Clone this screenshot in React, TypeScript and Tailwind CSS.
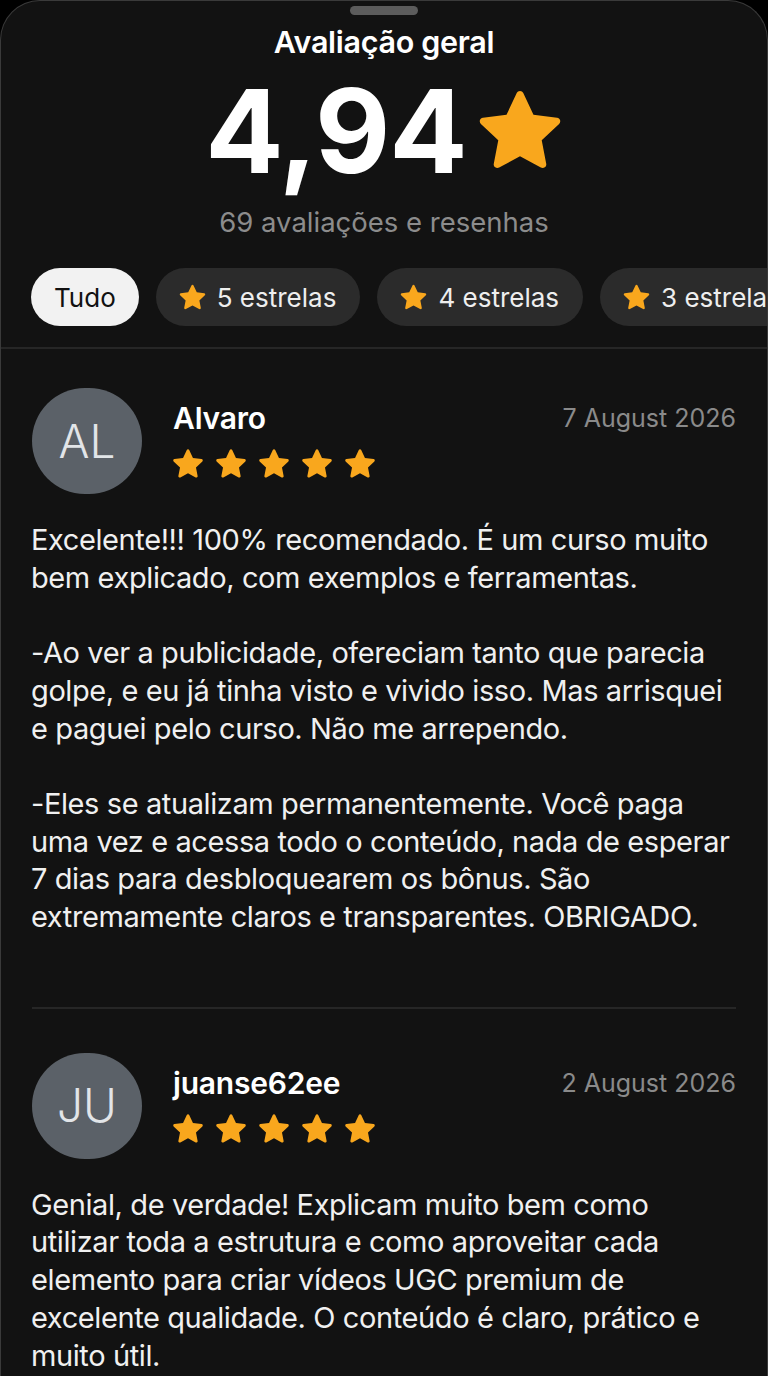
import React from "react";

const Star = ({ className }: { className?: string }) => (
  <svg viewBox="0 0 24 24" className={className} fill="currentColor">
    <path d="M12 2.2c.35 0 .66.2.8.52l2.5 5.3 5.77.72c.35.04.64.29.75.62.1.34 0 .7-.25.94l-4.25 3.98 1.1 5.72c.07.34-.07.7-.35.9-.29.21-.66.23-.97.06L12 18.2l-5.1 2.76c-.31.17-.68.15-.97-.06-.28-.2-.42-.56-.35-.9l1.1-5.72-4.25-3.98c-.25-.24-.35-.6-.25-.94.11-.33.4-.58.75-.62l5.77-.72 2.5-5.3c.14-.32.45-.52.8-.52z" />
  </svg>
);

const reviews = [
  {
    initials: "AL",
    name: "Alvaro",
    date: "7 August 2026",
    text:
      "Excelente!!! 100% recomendado. É um curso muito\nbem explicado, com exemplos e ferramentas.\n\n-Ao ver a publicidade, ofereciam tanto que parecia\ngolpe, e eu já tinha visto e vivido isso. Mas arrisquei\ne paguei pelo curso. Não me arrependo.\n\n-Eles se atualizam permanentemente. Você paga\numa vez e acessa todo o conteúdo, nada de esperar\n7 dias para desbloquearem os bônus. São\nextremamente claros e transparentes. OBRIGADO.",
  },
  {
    initials: "JU",
    name: "juanse62ee",
    date: "2 August 2026",
    text:
      "Genial, de verdade! Explicam muito bem como\nutilizar toda a estrutura e como aproveitar cada\nelemento para criar vídeos UGC premium de\nexcelente qualidade. O conteúdo é claro, prático e\nmuito útil.",
  },
];

const chips = ["5 estrelas", "4 estrelas", "3 estrelas", "2 estrelas"];

export default function App() {
  return (
    <div
      className="w-[768px] h-[1376px] overflow-hidden bg-black"
      style={{ fontFamily: "Inter, 'Noto Sans', sans-serif" }}
    >
      <div className="h-full bg-[#121212] rounded-t-[40px] border-t border-l border-r border-[#3a3a3a] overflow-hidden">
        <div className="flex justify-center pt-[5px]">
          <div className="w-[68px] h-[9px] rounded-full bg-[#5c5c5c]" />
        </div>
        <div className="flex flex-col items-center">
          <div className="mt-[8px] text-[30.5px] leading-[38px] font-semibold text-white tracking-[-0.3px]">
            Avaliação geral
          </div>
          <div className="mt-[15px] pl-[6px] flex items-center">
            <span className="text-[116px] leading-[110px] font-bold text-white tracking-[-1px]">4,94</span>
            <Star className="ml-[4px] w-[98px] h-[98px] text-[#f9a71d]" />
          </div>
          <div className="mt-[18px] text-[27.5px] leading-[36px] text-[#8c8c8c]">
            69 avaliações e resenhas
          </div>
        </div>
        <div className="mt-[28px] flex gap-[17px] pl-[30px] overflow-hidden">
          <div className="shrink-0 h-[58px] px-[23px] rounded-full bg-[#f2f2f2] text-[#111] text-[26px] flex items-center">
            Tudo
          </div>
          {chips.map((c) => (
            <div
              key={c}
              className="shrink-0 h-[58px] pl-[21px] pr-[24px] rounded-full bg-[#2b2b2b] text-[#eeeeee] text-[26px] flex items-center gap-[9px]"
            >
              <Star className="w-[31px] h-[31px] text-[#f9a71d]" />
              <span>{c}</span>
            </div>
          ))}
        </div>
        <div className="mt-[21px] h-[2px] bg-[#262626]" />
        <div className="px-[31px]">
          {reviews.map((r, i) => (
            <div key={r.name} className={i > 0 ? "border-t-2 border-[#262626] pt-[44px]" : "pt-[39px]"}>
              <div className="flex items-start">
                <div className="shrink-0 w-[110px] h-[106px] rounded-full bg-[#5b6168] flex items-center justify-center text-[46px] text-[#e2e5e8] font-light">
                  {r.initials}
                </div>
                <div className="ml-[31px] flex-1">
                  <div className="flex items-start justify-between">
                    <div className="mt-[12px] text-[30px] leading-[36px] font-semibold text-white tracking-[-0.2px]">
                      {r.name}
                    </div>
                    <div className="mt-[14px] text-[25px] leading-[32px] text-[#8a8a8a]">{r.date}</div>
                  </div>
                  <div className="mt-[10px] -ml-[3px] flex gap-[7px]">
                    {[0, 1, 2, 3, 4].map((s) => (
                      <Star key={s} className="w-[36px] h-[36px] text-[#f9a71d]" />
                    ))}
                  </div>
                </div>
              </div>
              <p className="mt-[27px] pb-[71px] -ml-[1px] whitespace-pre-line text-[29px] leading-[37.7px] text-[#f0f0f0] tracking-[-0.4px]">
                {r.text}
              </p>
            </div>
          ))}
        </div>
      </div>
    </div>
  );
}
